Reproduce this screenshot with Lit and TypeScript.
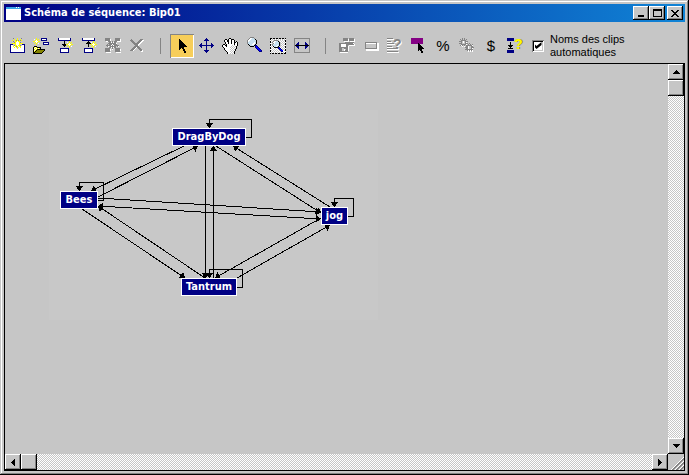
import { LitElement, html, svg, css } from "lit";
import { customElement, state } from "lit/decorators.js";

// Rows of characters become one-pixel squares, grouped in a path per colour.
const INK: Record<string, string> = {
  k: "#000", w: "#fff", y: "#ffff00", n: "#000084", g: "#848484", o: "#848400", b: "#0000ff", s: "#c6e0f0",
};
const pixels = (x: number, y: number, rows: string[]) => {
  const paths: Record<string, string> = {};
  rows.forEach((row, r) =>
    [...row].forEach((c, i) => {
      if (INK[c]) paths[c] = (paths[c] ?? "") + `M${x + i} ${y + r}h1v1h-1z`;
    })
  );
  return Object.entries(paths).map(([c, d]) => svg`<path fill=${INK[c]} d=${d}></path>`);
};

const BURST = ["...y...", ".w.y.y.", "..ywy..", "yywwwyy", "..ywy..", ".y.y.w.", "...y..."];

const ICONS: Record<string, unknown> = {
  newClip: pixels(5, 4, [
    "...g...y...g...",
    "....y..y..y....",
    "..y..ygyg.gy...",
    "...g.yywyy.....",
    "....gywwwyg....",
    "..yyyywwwyyyy..",
    "nnn..ywwwy..nnn",
    "nww.gyywyyg.wwn",
    "nwwywygywyywwwn",
    "nwwwyw.y.wywwwn",
    "nwwwwwwywwwwwwn",
    "nwwwwwwwwwwwwwn",
    "nwwwwwwwwwwwwwn",
    "nwwwwwwwwwwwwwn",
    "nnnnnnnnnnnnnnn",
  ]),
  openClip: pixels(4, 4, [
    "...y....nnnnnn..",
    ".w.y.y..nwwwwn..",
    "..ywy...nnnnnn..",
    "yywwwyy.........",
    "..ywy.....nnnnnn",
    ".y.y.w....nwwwwn",
    "...y......nnnnnn",
    "................",
    ".kkk............",
    "kywykkkk........",
    "kwywywyk........",
    "kywykkkkkkkk....",
    "kwykoooooook....",
    "kykoooooook.....",
    "kkoooooook......",
    "kkkkkkkkk.......",
  ]),
  addAfter: [
    pixels(5, 4, [
      "nwwwwwwwwwwwn", "nwwwwwwwwwwwn", "nnnnnnnnnnnnn", "......k......", "......k......", "......k......",
      "....kkkkk....", ".....kkk.....", "......k......", ".............", "..nnnnnnnnn..", "..nwwwwwwwn..",
      "..nwwwwwwwn..", "..nwwwwwwwn..", "..nnnnnnnnn..",
    ]),
    pixels(13, 7, BURST),
  ],
  addBefore: [
    pixels(5, 4, [
      "nwwwwwwwwwwwn", "nwwwwwwwwwwwn", "nnnnnnnnnnnnn", "......k......", ".....kkk.....", "....kkkkk....",
      "......k......", "......k......", "......k......", ".............", "..nnnnnnnnn..", "..nwwwwwwwn..",
      "..nwwwwwwwn..", "..nwwwwwwwn..", "..nnnnnnnnn..",
    ]),
    pixels(13, 7, BURST),
  ],
  linkAll: pixels(4, 4, [
    "ggggg.....ggggg.",
    "gggggw....gggggw",
    "gggggw....gggggw",
    ".wwggg.g.gggwwww",
    "....ggwgwgg.....",
    "...ggggggggw....",
    "..g.gggwgggg....",
    ".gggggwgwggggg..",
    "..gw.gggggg.gw..",
    "....ggwgwgg.....",
    "ggggg..g..ggggg.",
    "gggggw.w..gggggw",
    "gggggw....gggggw",
    "ggggg.....ggggg.",
    ".wwwww.....wwwww",
  ]),
  remove: svg`<path d="M7 7 18 18M18 6 7 17" stroke="#fff" stroke-width="2"></path><path d="M6 6 17 17M17 5 6 17" stroke="#848484" stroke-width="2"></path>`,
  select: pixels(9, 5, [
    "k.......", "kk......", "kkk.....", "kkkk....", "kkkkk...", "kkkkkk..", "kkkkkkk.", "kkkkkkkk",
    "kkkkk...", "kk.kk...", "k...kk..", "....kk..", ".....kk.", ".....kk.",
  ]),
  move: pixels(5, 4, [
    ".......n.......", "......nnn......", ".....nnnnn.....", ".......n.......", ".......n.......", "..n....n....n..",
    ".nn....n....nn.", "nnnnnnnnnnnnnnn", ".nn....n....nn.", "..n....n....n..", ".......n.......", ".......n.......",
    ".....nnnnn.....", "......nnn......", ".......n.......",
  ]),
  pan: pixels(4, 4, [
    ".......kk.......",
    "...kk.kwwkkk....",
    "..kwwkkwwkwwk...",
    "..kwwkkwwkwwk.k.",
    "...kwwkwwkwwkkwk",
    "...kwwkwwkwwkwwk",
    ".kk.kwwwwwwwkwwk",
    "kwwkkwwwww.w.wwk",
    "kwwwkwwww.w.w.k.",
    ".kwwwwww.w.w.wk.",
    "..kwwwwww.w.w.k.",
    "..kwwwww.w.w.k..",
    "...kwwwww.w.wk..",
    "....kwww.w.wk...",
    ".....kwww.w.k...",
    ".....kww.w.wk...",
  ]),
  zoom: pixels(5, 3, [
    "...gggg........",
    "..gwwssg.......",
    ".gwwssssk......",
    "gwwssssssk.....",
    "gwsssssssk.....",
    "gsssssswsk.....",
    "gssssswwsk.....",
    ".kssswwsk......",
    "..kssssknn.....",
    "...kkkk.nbn....",
    "........nbbn...",
    ".........nbbn..",
    "..........nbbn.",
    "...........nbbn",
    "............nnn",
  ]),
  zoomRegion: pixels(4, 4, [
    "kk.kk.kk.kk.kk.k",
    "kw.w.w.w.w.w.w.w",
    "w.w.gggg.w.w.w.k",
    "kw.gwwssk.w.w.wk",
    "k.gwwssssk.w.w.w",
    "ww.gwssssk..w.wk",
    "k.gssssssk.w.w.k",
    "kwgsssswsk..w.ww",
    "w.wksswsk..w.w.k",
    "kw.wkkkknnw.w.wk",
    "k.w.w.w.nbnw.w.w",
    "ww.w.w.w.nbn..wk",
    "k.w.w.w.w.nbbw.k",
    "kw.w.w.w.w.nnwww",
    "w.w.w.w.w.w.w.wk",
    "k.kk.kk.kk.kk.kk",
  ]),
  fitWidth: svg`<rect x="4.5" y="4.5" width="15" height="14" fill="none" stroke="#848484"></rect>${pixels(5, 8, [
    "...n......n...", "..nn......nn..", ".nnn......nnn.", "kkkkkkkkkkkkkk", ".nnn......nnn.", "..nn......nn..", "...n......n...",
  ])}`,
  save: pixels(4, 4, [
    "....ggggg.ggggg.",
    "....gggggwgggggw",
    "....gggggwgggggw",
    ".....wwwww.wwwww",
    "......ggggggggg.",
    "ggggggggggggggw.",
    "ggwwwwwggggggggw",
    "ggwwwwwgg.wwwwww",
    "ggwwwwwggw......",
    "gggggggggw......",
    "ggg..ggggw......",
    "ggg..w.ggw......",
    "ggg..wgggw......",
    "ggggggggg.......",
    ".wwwwwwww.......",
  ]),
  clip: svg`<path d="M7 9H19V16H7" fill="none" stroke="#fff"></path><rect x="6.5" y="8.5" width="11" height="6" fill="none" stroke="#848484"></rect><path d="M7 15.5h11.5v-7" fill="none" stroke="#fff"></path>`,
  script: svg`<path d="M4 5.5h7M4 8.5h5M4 10.5h8M4 13.5h6M4 15.5h12M4 18.5h12" stroke="#fff"></path><path d="M4 4.5h6M4 7.5h4M4 9.5h7M4 12.5h5M4 14.5h11M4 17.5h11" stroke="#848484"></path><text x="11" y="16" class="mark" fill="#fff">?</text><text x="10" y="15" class="mark" fill="#848484">?</text>`,
  pick: [
    svg`<rect x="4" y="4" width="12" height="6" fill="#840084"></rect>`,
    pixels(11, 9, ["k.....", "kk....", "kkk...", "kkkk..", "kkkkk.", "kkkkkk", "kkkk..", "k.kk..", "...kk.", "...kk."]),
  ],
  gears: pixels(4, 4, [
    "...g.g.........",
    ".g.g.g.g.......",
    "..ggggg........",
    "ggg.w.ggg......",
    "..g.w.gw.......",
    "ggg...ggg.g....",
    "..gggggw.g.g.g.",
    ".gwg.g.ggggggw.",
    "...w.w.ggw..gg.",
    "......gggw..ggg",
    ".......ggw..gw.",
    "......gggggggg.",
    "........gwgwgw.",
    ".........w.w.w.",
  ]),
  help: svg`<rect x="4" y="4" width="7" height="3" fill="#000084"></rect><rect x="4" y="16" width="7" height="3" fill="#000084"></rect>${pixels(5, 8, ["..k..", "..k..", "..k..", "kkkkk", ".kkk.", "..k..", "kkkkk"])}<text x="12" y="15" class="mark" fill="#848400">?</text><text x="11" y="15" class="mark" fill="#ffff00">?</text>`,
};

const GROUPS: [string, string][][] = [
  [
    ["newClip", "Nouveau clip"], ["openClip", "Ouvrir un clip"], ["addAfter", "Ajouter après"],
    ["addBefore", "Ajouter avant"], ["linkAll", "Lier tout"], ["remove", "Supprimer"],
  ],
  [
    ["select", "Sélectionner"], ["move", "Déplacer"], ["pan", "Panoramique"],
    ["zoom", "Zoom"], ["zoomRegion", "Zoom région"], ["fitWidth", "Largeur"],
  ],
  [
    ["save", "Enregistrer"], ["clip", "Clip"], ["script", "Script"], ["pick", "Choisir"],
    ["%", "Pourcentage"], ["gears", "Options"], ["$", "Coût"], ["help", "Aide"],
  ],
];

const NODES = [
  { name: "DragByDog", x: 167, y: 64, w: 74 },
  { name: "Bees", x: 55, y: 127, w: 38 },
  { name: "jog", x: 316, y: 143, w: 27 },
  { name: "Tantrum", x: 176, y: 214, w: 56 },
];

const EDGES = [
  "M241 73.5H246.5V55.5H204.5V64",
  "M93 136.5H98.5V118.5H74.5V127",
  "M343 152.5H348.5V134.5H329.5V143",
  "M232 223.5H237.5V205.5H204.5V214",
  "M200.5 82V214",
  "M208.5 214V82",
  "M179 82 86 127",
  "M93 133 193 82",
  "M93 134 316 148",
  "M316 155 93 142",
  "M93 142 316 155",
  "M211 82 316 149",
  "M325 143 228 82",
  "M200 214 93 142",
  "M77 145 180 214",
  "M316 154 210 214",
  "M232 214 325 161",
];

const glyph = (rows: string[], w: number) =>
  html`<svg width=${w} height=${rows.length} viewBox="0 0 ${w} ${rows.length}" shape-rendering="crispEdges" aria-hidden="true">${pixels(0, 0, rows)}</svg>`;

const ARROWS = {
  up: glyph(["...k...", "..kkk..", ".kkkkk.", "kkkkkkk"], 7),
  down: glyph(["kkkkkkk", ".kkkkk.", "..kkk..", "...k..."], 7),
  left: glyph(["...k", "..kk", ".kkk", "kkkk", ".kkk", "..kk", "...k"], 4),
  right: glyph(["k...", "kk..", "kkk.", "kkkk", "kkk.", "kk..", "k..."], 4),
};

@customElement("app-root")
export class AppRoot extends LitElement {
  @state() private tool = "select";

  static styles = css`
    :host { display: block; height: 100vh; font-family: "Liberation Sans", Arial, sans-serif; color: #000; }
    * { box-sizing: border-box; }
    button { margin: 0; padding: 0; border: 0; background: none; color: inherit; font: inherit; display: grid; place-items: center; }
    svg { display: block; }
    .window {
      display: flex; flex-direction: column; height: 100%; padding: 4px; background: #c6c6c6;
      box-shadow: inset -1px -1px #000, inset 1px 1px #c6c6c6, inset -2px -2px #848484, inset 2px 2px #fff;
    }
    .title {
      display: flex; align-items: center; height: 18px; padding: 0 2px; flex: none;
      background: linear-gradient(90deg, #000084, #1084d6); color: #fff;
    }
    .title h1 { flex: 1; margin: 0 0 0 2px; font: bold 11px/18px "DejaVu Sans Condensed", "DejaVu Sans", sans-serif; }
    .raised { background: #c6c6c6; box-shadow: inset -1px -1px #000, inset 1px 1px #fff, inset -2px -2px #848484; }
    .caption { width: 16px; height: 14px; color: #000; }
    .close { margin-left: 2px; }
    .toolbar { display: flex; align-items: center; flex: none; height: 41px; padding: 6px 1px 0; }
    .group { display: flex; }
    .tool { width: 24px; height: 24px; font-size: 15px; line-height: 24px; }
    .tool.on { background: #f7ce5a; box-shadow: inset 1px 1px #848484, inset -1px -1px #fff; }
    .mark { font: bold 14px "Liberation Sans", sans-serif; }
    .sep { width: 1px; height: 16px; margin: 0 9px 0 11px; background: #848484; }
    .auto { display: flex; align-items: center; gap: 6px; margin-left: 5px; font-size: 11px; line-height: 13px; }
    .auto span { width: 84px; }
    .auto input {
      appearance: none; margin: 0; width: 12px; height: 12px; flex: none; display: grid; place-items: center; background: #fff;
      box-shadow: inset 1px 1px #848484, inset -1px -1px #fff, inset 2px 2px #000, inset -2px -2px #c6c6c6;
    }
    .auto input:checked::before {
      content: ""; width: 7px; height: 7px; background: #000;
      clip-path: polygon(0 29%, 29% 57%, 100% 0, 100% 43%, 29% 100%, 0 71%);
    }
    .frame {
      flex: 1; min-height: 0; display: grid; grid-template: minmax(0, 1fr) 16px / minmax(0, 1fr) 16px; border: 1px solid #000;
    }
    .canvas { position: relative; overflow: hidden; }
    .node {
      position: absolute; height: 18px; border: 1px solid #fff; background: #000084; color: #fff; white-space: nowrap;
      font: bold 11px/16px "DejaVu Sans Condensed", "DejaVu Sans", sans-serif;
    }
    .bar { display: flex; background: repeating-conic-gradient(#fff 0 25%, #c6c6c6 0 50%) 0 0 / 2px 2px; }
    .vertical { flex-direction: column; }
    .bar button, .thumb { width: 16px; height: 16px; flex: none; }
    .end { margin-left: auto; }
    .vertical .end { margin: auto 0 0; }
  `;

  private icon(name: string) {
    if (name.length === 1) return name;
    return html`<svg width="24" height="24" viewBox="0 0 24 24" shape-rendering="crispEdges" aria-hidden="true">${ICONS[name]}</svg>`;
  }

  render() {
    return html`
      <main class="window">
        <header class="title">
          <svg width="16" height="14" viewBox="0 0 16 14" shape-rendering="crispEdges" aria-hidden="true">
            <rect width="15" height="13" y="1" fill="#fff"></rect>
            <rect width="15" height="2" y="1" fill="#39a5e7"></rect>
            <path d="M10 1h1v1h-1zM12 1h1v1h-1z" fill="#fff"></path>
          </svg>
          <h1>Schéma de séquence: Bip01</h1>
          <button class="caption raised" aria-label="Réduire">${glyph(["........", "........", "........", "........", "........", "........", ".kkkkkk.", ".kkkkkk."], 8)}</button>
          <button class="caption raised" aria-label="Agrandir">${glyph(["kkkkkkkkk", "kkkkkkkkk", "k.......k", "k.......k", "k.......k", "k.......k", "k.......k", "kkkkkkkkk"], 9)}</button>
          <button class="caption raised close" aria-label="Fermer">${glyph(["kk....kk", ".kk..kk.", "..kkkk..", "...kk...", "..kkkk..", ".kk..kk.", "kk....kk"], 8)}</button>
        </header>
        <nav class="toolbar">
          ${GROUPS.map(
            (group, i) => html`
              ${i ? html`<span class="sep"></span>` : ""}
              <div class="group">
                ${group.map(
                  ([id, label]) => html`<button class="tool ${this.tool === id ? "on" : ""}" aria-label=${label} @click=${() => (this.tool = id)}>${this.icon(id)}</button>`
                )}
              </div>`
          )}
          <label class="auto"><input type="checkbox" checked /><span>Noms des clips automatiques</span></label>
        </nav>
        <section class="frame">
          <div class="canvas">
            <svg width="100%" height="100%" fill="none" stroke="#000" shape-rendering="crispEdges" aria-hidden="true">
              <defs>
                <marker id="head" markerUnits="userSpaceOnUse" markerWidth="6" markerHeight="8" refX="5" refY="4" orient="auto">
                  <path d="M0 0 5 4 0 8z" fill="#000" stroke="none"></path>
                </marker>
              </defs>
              <rect x="44" y="46" width="329" height="210" fill="#c8c8c8" stroke="none"></rect>
              ${EDGES.map((d) => svg`<path d=${d} marker-end="url(#head)"></path>`)}
            </svg>
            ${NODES.map(
              (n) => html`<button class="node" style="left:${n.x}px;top:${n.y}px;width:${n.w}px">${n.name}</button>`
            )}
          </div>
          <div class="bar vertical">
            <button class="raised" aria-label="Haut">${ARROWS.up}</button>
            <span class="thumb raised"></span>
            <button class="raised end" aria-label="Bas">${ARROWS.down}</button>
          </div>
          <div class="bar">
            <button class="raised" aria-label="Gauche">${ARROWS.left}</button>
            <span class="thumb raised"></span>
            <button class="raised end" aria-label="Droite">${ARROWS.right}</button>
          </div>
          <svg width="16" height="16" viewBox="0 0 16 16" shape-rendering="crispEdges" aria-hidden="true">
            <path d="M3 16 16 3M7 16 16 7M11 16 16 11" stroke="#fff"></path>
            <path d="M4 16 16 4M5 16 16 5M8 16 16 8M9 16 16 9M12 16 16 12M13 16 16 13" stroke="#848484"></path>
          </svg>
        </section>
      </main>
    `;
  }
}
